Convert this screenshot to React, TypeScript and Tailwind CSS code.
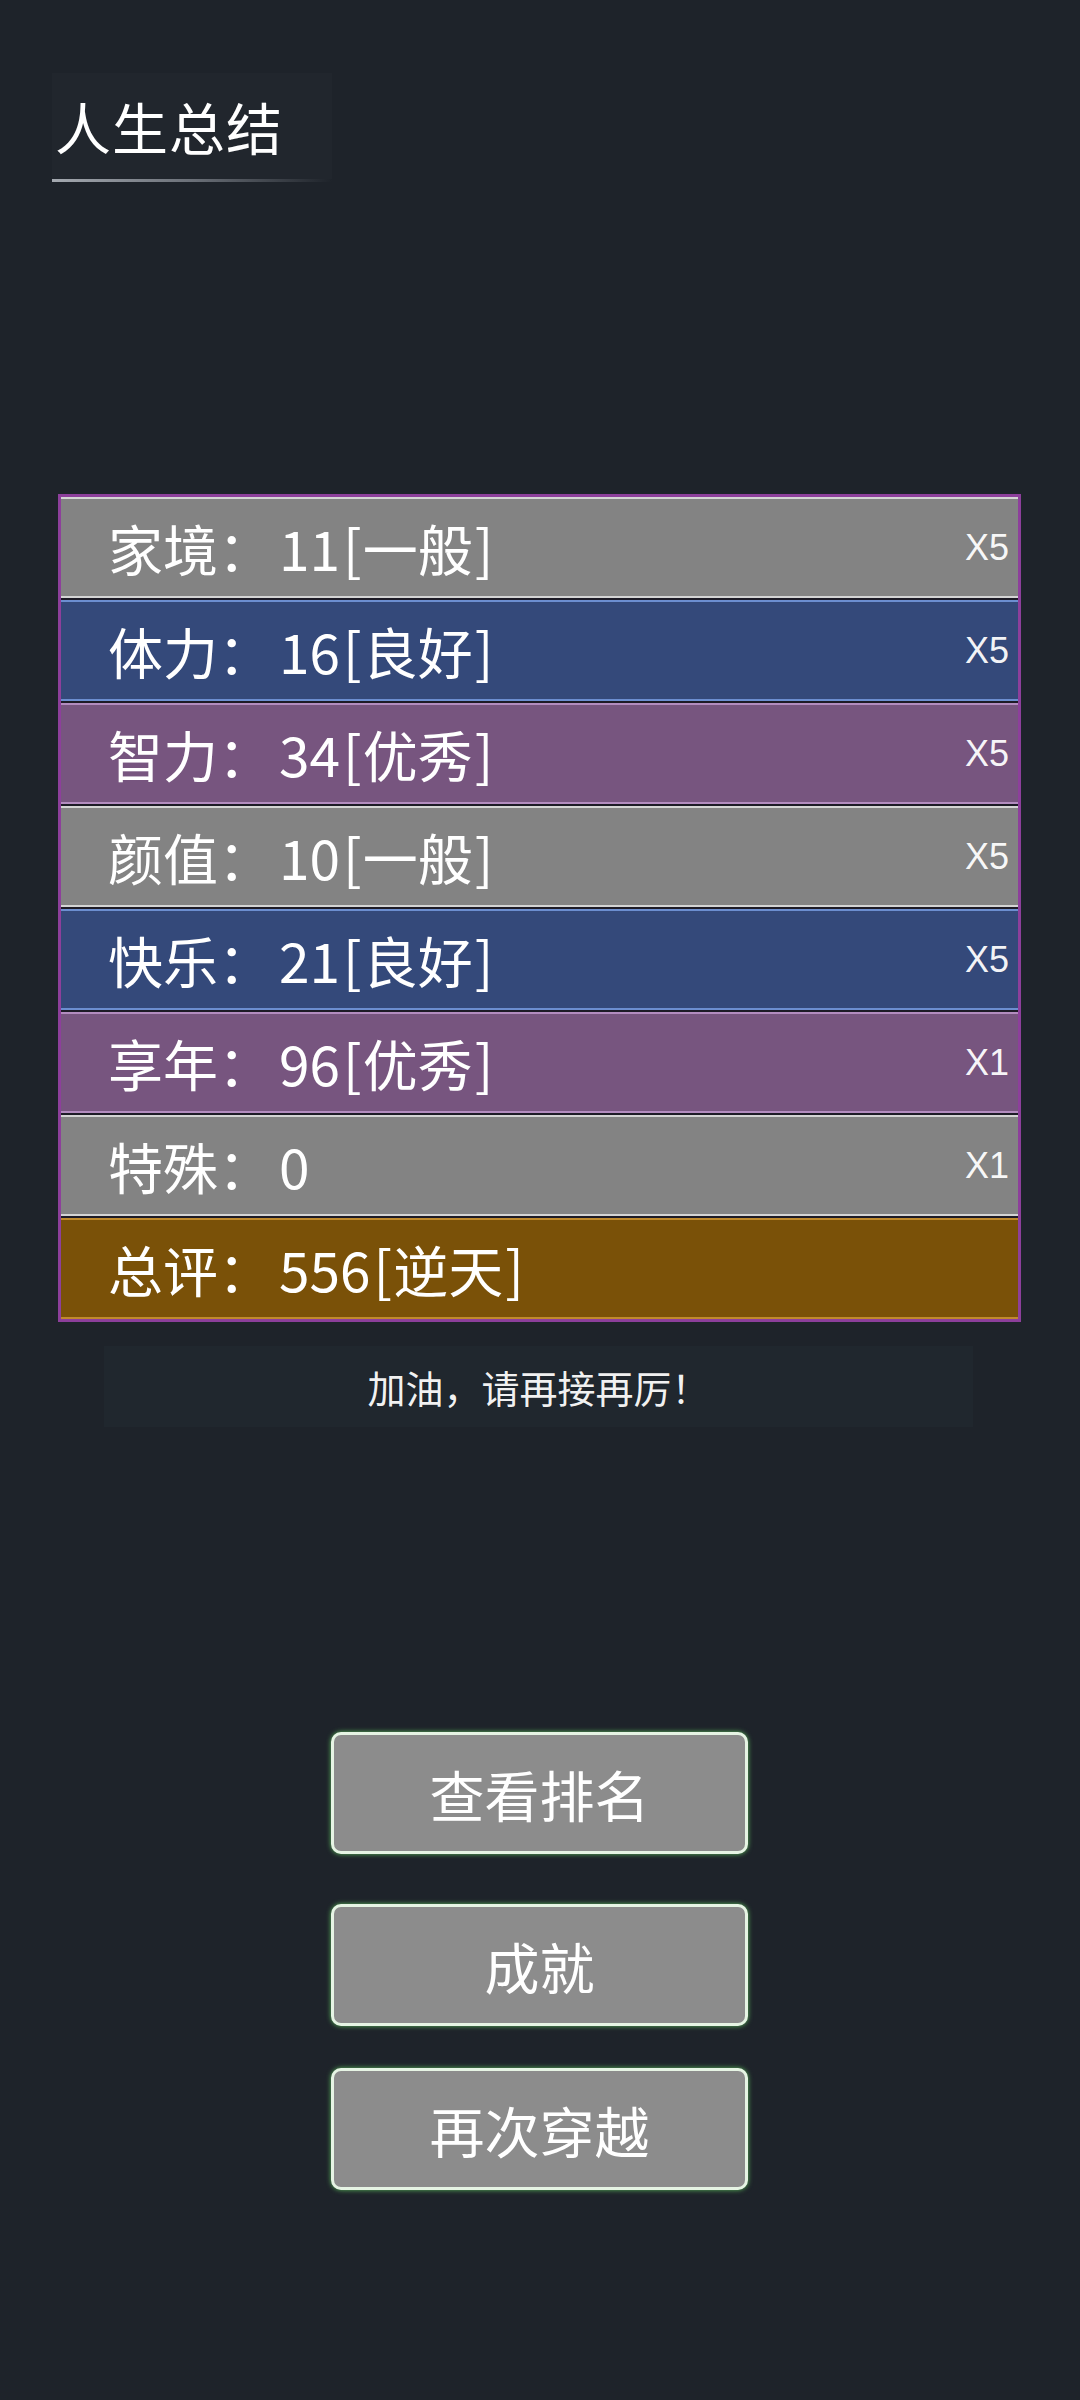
import React from 'react';

interface StatRow {
  label: string;
  score: string;
  grade?: string;
  mult?: string;
  tone: 'gray' | 'blue' | 'purple' | 'gold';
}

const rows: StatRow[] = [
  { label: '家境', score: '11', grade: '一般', mult: 'X5', tone: 'gray' },
  { label: '体力', score: '16', grade: '良好', mult: 'X5', tone: 'blue' },
  { label: '智力', score: '34', grade: '优秀', mult: 'X5', tone: 'purple' },
  { label: '颜值', score: '10', grade: '一般', mult: 'X5', tone: 'gray' },
  { label: '快乐', score: '21', grade: '良好', mult: 'X5', tone: 'blue' },
  { label: '享年', score: '96', grade: '优秀', mult: 'X1', tone: 'purple' },
  { label: '特殊', score: '0', mult: 'X1', tone: 'gray' },
  { label: '总评', score: '556', grade: '逆天', tone: 'gold' },
];

// full class strings per row colour
const toneClass: Record<StatRow['tone'], string> = {
  gray: 'bg-[#838383] border-[#d4d4d4]',
  blue: 'bg-[#34497a] border-[#6c8ed0]',
  purple: 'bg-[#77557f] border-[#b38cbf]',
  gold: 'bg-[#7a5108] border-[#c08a2c]',
};

const buttonClass =
  'w-[417px] h-[122px] ml-[-1px] rounded-[10px] border-[3px] border-[#e6f4e4] bg-[#8c8c8c] shadow-[0_0_5px_#5cb85c] flex items-center justify-center';

const App = () => {
  return (
    <div
      className="min-h-[2400px] w-[1080px] bg-[#1e232a] text-white"
      style={{ fontFamily: '"Noto Sans CJK SC", "Noto Sans", sans-serif' }}
    >
      {/* title */}
      <div className="pt-[73px] pl-[52px]">
        <div className="w-[280px] h-[106px] flex items-center pl-[3px] bg-white/[0.015]">
          <span className="text-[56px] leading-none tracking-[1px]">人生总结</span>
        </div>
        <div className="w-[280px] h-[3px] bg-gradient-to-r from-[#a4a9b0] via-[#6b7078] to-transparent" />
      </div>

      {/* stats panel */}
      <div className="mt-[312px] ml-[58px] w-[963px] border-[3px] border-[#8d3f9b] bg-[#1d1b26] flex flex-col gap-[2px]">
        {rows.map(row => (
          <div
            key={row.label}
            className={`h-[101px] border-y-2 flex items-center justify-between pl-[47px] pr-[9px] ${toneClass[row.tone]}`}
          >
            <span className="text-[55px] leading-none flex items-center">
              <span>{row.label}：</span>
              <span className="ml-[6px]">{row.score}</span>
              {row.grade && (
                <>
                  <span className="ml-[3px]">[</span>
                  <span className="ml-[1px]">{row.grade}</span>
                  <span className="ml-[2px]">]</span>
                </>
              )}
            </span>
            {row.mult && (
              <span
                className="text-[36px] leading-none text-white/95"
                style={{ fontFamily: '"Liberation Sans", Arial, sans-serif' }}
              >
                {row.mult}
              </span>
            )}
          </div>
        ))}
      </div>

      {/* message */}
      <div className="mt-[24px] ml-[104px] w-[869px] h-[81px] bg-[#20272e] flex items-center justify-center">
        <span className="text-[38px] leading-none text-white/95">加油，请再接再厉！</span>
      </div>

      {/* buttons */}
      <div className="mt-[305px] flex flex-col items-center">
        <button className={buttonClass}>
          <span className="text-[55px] leading-none text-white">查看排名</span>
        </button>
        <button className={`mt-[50px] ${buttonClass}`}>
          <span className="text-[55px] leading-none text-white">成就</span>
        </button>
        <button className={`mt-[42px] ${buttonClass}`}>
          <span className="text-[55px] leading-none text-white">再次穿越</span>
        </button>
      </div>
    </div>
  );
};

export default App;
